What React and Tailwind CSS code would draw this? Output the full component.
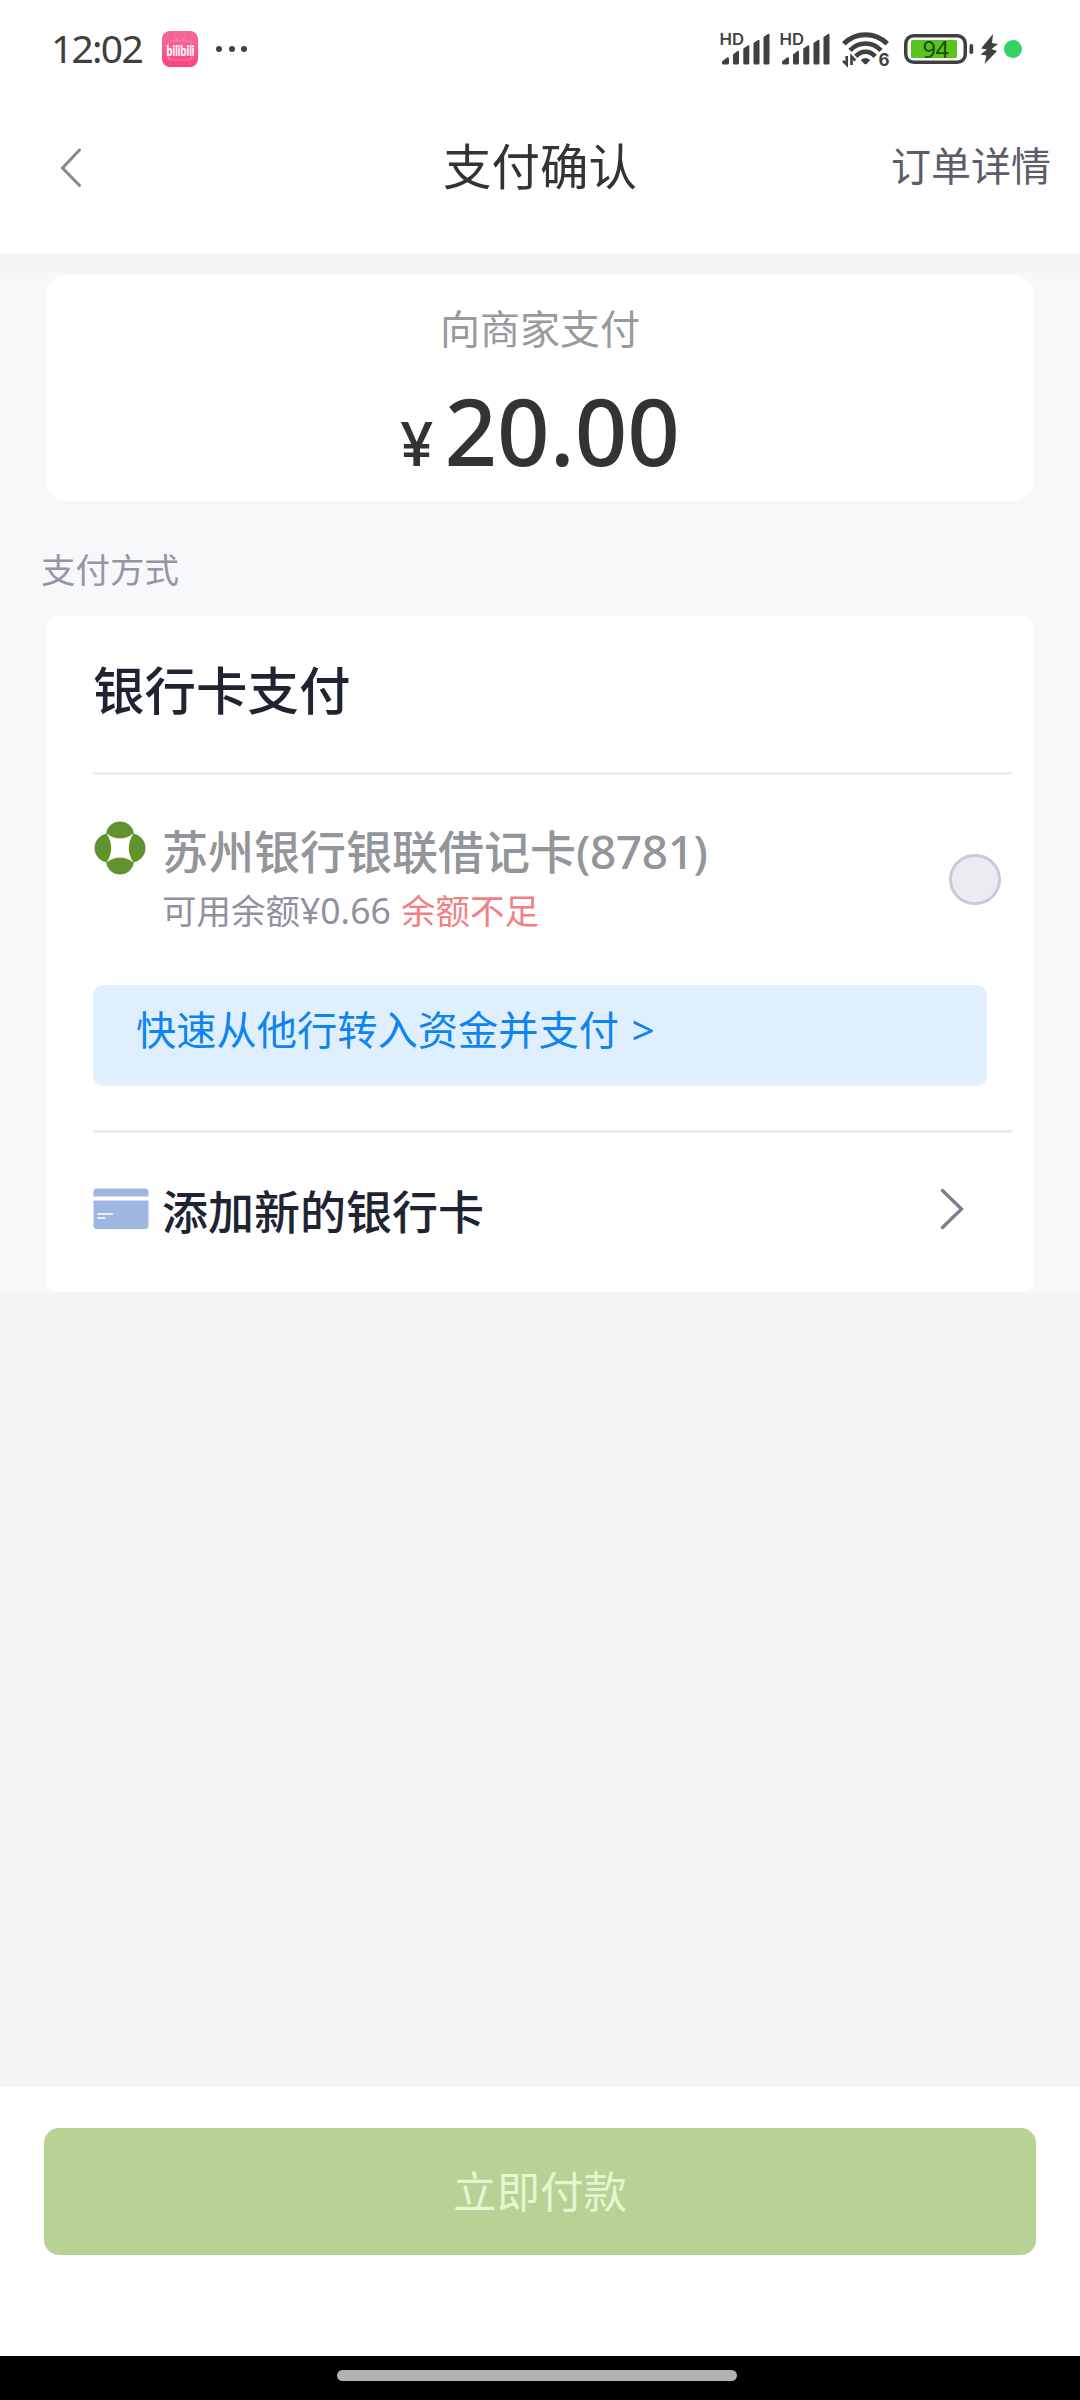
const LATIN = "font-['Noto_Sans','Noto_Sans_CJK_SC',sans-serif]";

function BilibiliBadge() {
  return (
    <svg className="overflow-visible" width="36" height="36" viewBox="0 0 36 36">
      <defs>
        <linearGradient id="pink" x1="0" y1="0" x2="0" y2="1">
          <stop offset="0" stopColor="#f2699a" />
          <stop offset="0.5" stopColor="#fb5a91" />
          <stop offset="1" stopColor="#fb3f82" />
        </linearGradient>
      </defs>
      <rect width="36" height="36" rx="8" fill="url(#pink)" />
      <rect x="6" y="10" width="24" height="19" rx="4" fill="none" stroke="#fb86ae" strokeWidth="1.2" />
      <path d="M13 6l3 4M23 6l-3 4" stroke="#fb86ae" strokeWidth="1.2" />
      <text
        x="4.5"
        y="24.5"
        fontFamily="Lato, sans-serif"
        fontWeight="900"
        fontSize="15.500"
        fill="#fff"
        textLength="28"
        lengthAdjust="spacingAndGlyphs"
      >
        bilibili
      </text>
    </svg>
  );
}

function Signal() {
  return (
    <svg className="overflow-visible" width="50" height="34" viewBox="0 0 50 34" fill="#404040">
      <text
        x="-0.5"
        y="13"
        fontFamily="Inter, sans-serif"
        fontWeight="600"
        fontSize="16"
        textLength="24.5"
        lengthAdjust="spacingAndGlyphs"
      >
        HD
      </text>
      <path d="M2 29.500l5-4q2-1 2 1v4.500q0 1.500-1.500 1.500h-4q-1.500 0-1.500-1.500z" />
      <path d="M13 22.500l4.500-3.500q1.500-1 1.500 1v11q0 1.500-1.500 1.500h-3q-1.500 0-1.500-1.500z" />
      <path d="M23.300 16.500l4.500-3q1.500-1 1.500 1v16.500q0 1.500-1.500 1.500h-3q-1.500 0-1.500-1.500z" />
      <path d="M33.500 11l4.500-3q1.500-1 1.500 1v22q0 1.500-1.500 1.500h-3q-1.500 0-1.500-1.500z" />
      <path d="M43.500 5l4.500-3q1.500-1 1.500 1v28q0 1.500-1.500 1.500h-3q-1.500 0-1.500-1.500z" />
    </svg>
  );
}

function Wifi() {
  return (
    <svg className="overflow-visible" width="48" height="36" viewBox="0 0 48 36" fill="none" stroke="#404040">
      <path d="M1.800 12.800C14 0.800 33 0.800 45.200 12.800" strokeWidth="5" />
      <path d="M8 19.300C17 10.300 30 10.300 39 19.300" strokeWidth="4.600" />
      <path d="M13.800 25.300C19.500 19.300 27.500 19.300 33.200 25.300" strokeWidth="4.600" />
      <path d="M18.800 29q4.700-4 9.400 0l-3.400 3.800q-1.300 1.100-2.600 0z" fill="#404040" stroke="none" />
      <path d="M4.700 25v8.500L1 29.800M9.500 34v-8.500l3.800 4" strokeWidth="2.600" />
      <text
        x="36.500"
        y="34.500"
        fontFamily="Inter, sans-serif"
        fontWeight="700"
        fontSize="17"
        fill="#404040"
        stroke="none"
      >
        6
      </text>
    </svg>
  );
}

function Battery() {
  return (
    <svg className="overflow-visible" width="70" height="32" viewBox="0 0 70 32">
      <rect x="1.750" y="2.750" width="59.500" height="26.500" rx="8" fill="none" stroke="#404040" strokeWidth="3.500" />
      <rect x="7" y="7" width="46" height="18" rx="1.500" fill="#58c41e" />
      <rect x="65.500" y="11" width="3.700" height="10" rx="1.800" fill="#404040" />
      <text
        x="31.500"
        y="25"
        textAnchor="middle"
        fontFamily="Noto Sans, sans-serif"
        fontWeight="400"
        fontSize="23.500"
        letterSpacing="-0.5"
        fill="#1c4a0c"
      >
        94
      </text>
    </svg>
  );
}

function BankLogo() {
  return (
    <svg width="52" height="54" viewBox="0 0 52 54">
      <g fill="#62922c">
        <circle cx="26" cy="14.500" r="14" />
        <circle cx="26" cy="39.500" r="14" />
        <circle cx="15" cy="27" r="14.500" />
        <circle cx="37" cy="27" r="14.500" />
      </g>
      <path
        d="M12.500 12.500Q26 22.500 39.500 12.500Q30 27 39.500 41.500Q26 31.500 12.500 41.500Q22 27 12.500 12.500z"
        fill="#fff"
      />
    </svg>
  );
}

function CardIcon() {
  return (
    <svg width="56" height="42" viewBox="0 0 56 42">
      <path d="M4 0.500h48q3.500 0 3.500 3.500v4.500h-55V4q0-3.500 3.500-3.500z" fill="#9fb6e2" />
      <path d="M0.500 12.500h55v25q0 3.500-3.500 3.500H4q-3.500 0-3.500-3.500z" fill="#9fb6e2" />
      <path d="M5 26h14M5 30h6.500" stroke="#e8eefa" strokeWidth="2.200" strokeLinecap="round" />
    </svg>
  );
}

function StatusBar() {
  return (
    <div className="flex h-[98px] shrink-0 items-center justify-between pr-[58px] pl-[51px]">
      <div className="flex items-center">
        <span className={`w-[111px] pb-[2px] text-[39px] leading-[54px] tracking-[-1.750px] text-[#404040] ${LATIN}`}>
          12:02
        </span>
        <BilibiliBadge />
        <div className="ml-[18px] flex gap-[6.500px]">
          <i className="size-[6px] rounded-full bg-[#404040]" />
          <i className="size-[6px] rounded-full bg-[#404040]" />
          <i className="size-[6px] rounded-full bg-[#404040]" />
        </div>
      </div>
      <div className="flex items-center">
        <Signal />
        <span className="w-[10px]" />
        <Signal />
        <span className="w-[12px]" />
        <Wifi />
        <span className="w-[14px]" />
        <Battery />
        <svg className="ml-[6px]" width="18" height="30" viewBox="0 0 18 30" fill="#404040">
          <path d="M13 0L1 14.500l6 1L0.500 20.500l6 1L4.500 30L17 17l-5.500-2L18 10l-6-1z" />
        </svg>
        <i className="ml-[6px] size-[18px] rounded-full bg-[#30d565]" />
      </div>
    </div>
  );
}

export default function App() {
  return (
    <div className="flex h-[2400px] w-[1080px] flex-col overflow-hidden bg-white font-['Noto_Sans_CJK_SC',sans-serif]">
      <StatusBar />

      <header className="grid h-[155px] shrink-0 grid-cols-3 items-start pt-[38px]">
        <svg className="mt-[12px] ml-[59px]" width="24" height="40" viewBox="0 0 24 40">
          <path d="M20.500 2L3.500 20L20.500 37.500" fill="none" stroke="#888" strokeWidth="3" strokeLinecap="round" />
        </svg>
        <h1 className="text-center text-[48.500px] leading-[56px] text-[#333]">支付确认</h1>
        <a className="pr-[29px] text-right text-[40px] leading-[56px] text-[#5c5c6b]">订单详情</a>
      </header>

      <div className="h-[20px] shrink-0 bg-[#f5f5f5]" />

      <main className="flex h-[1019px] shrink-0 flex-col bg-[#f7f8fa] px-[46px]">
        <section className="mt-[2px] flex h-[226px] flex-col items-center rounded-[22px] bg-white">
          <p className="mt-[26px] text-[40px] leading-[52px] text-[#999a9e]">向商家支付</p>
          <div className="mt-[33px] flex h-[90px] items-baseline font-['Inter',sans-serif] text-[#333]">
            <span className="text-[60px] leading-[80px] font-medium">¥</span>
            <span className={`ml-[11px] text-[92px] leading-[90px] font-medium ${LATIN}`}>20.00</span>
          </div>
        </section>

        <p className="mt-[42px] -ml-[5px] text-[34.500px] leading-[50px] text-[#9595a5]">支付方式</p>

        <section className="mt-[23px] flex h-[676px] flex-col rounded-[12px] bg-white pr-[22px] pl-[47px]">
          <h2 className="flex h-[156px] items-center pb-[13px] text-[51.500px] leading-[60px] font-medium text-[#1f2433]">
            银行卡支付
          </h2>
          <div className="h-[3px] bg-[#ededef]" />

          <div className="mt-[46px] flex items-start pr-[11px] pl-px">
            <BankLogo />
            <div className="ml-[16px] flex-1">
              <p className={`text-[46px] leading-[60px] font-medium text-[#929599] ${LATIN}`}>
                苏州银行银联借记卡<span className="tracking-[-0.4px]">(8781)</span>
              </p>
              <p className={`mt-[3px] text-[34.500px] leading-[52px] text-[#9191a2] ${LATIN}`}>
                可用余额<span className="text-[35.500px]">¥0.66 </span>
                <span className="ml-px text-[#f37f84]">余额不足</span>
              </p>
            </div>
            <span className="mt-[33px] h-[51px] w-[52px] rounded-full border-[3px] border-[#cbc9d1] bg-[#ebebf2]" />
          </div>

          <a
            className={`mt-[48px] mr-[25px] block h-[101px] rounded-[11px] bg-[#dfeffe] pt-[15px] pl-[43px] text-[40.250px] leading-[60px] text-[#0e83f2] ${LATIN}`}
          >
            快速从他行转入资金并支付 <span className="ml-[2px]">&gt;</span>
          </a>
          <div className="mt-[44px] h-[3px] bg-[#ededef]" />

          <div className="mt-[43px] flex h-[66px] items-center pr-[47px]">
            <CardIcon />
            <span className="ml-[13px] flex-1 text-[46px] leading-[66px] font-medium text-[#1f2433]">添加新的银行卡</span>
            <svg width="26" height="42" viewBox="0 0 26 42">
              <path d="M3.500 2.500L22.500 21L3.500 39.500" fill="none" stroke="#7f7f8b" strokeWidth="3.400" strokeLinecap="round" />
            </svg>
          </div>
        </section>
      </main>

      <div className="flex-1 bg-[#f5f5f5]" />

      <footer className="h-[269px] shrink-0 px-[44px] pt-[41px]">
        <button className="flex h-[127px] w-full items-center justify-center rounded-[15px] bg-[#b8d195] pb-[3px] text-[43.500px] leading-[60px] text-[#e2f7cf]">
          立即付款
        </button>
      </footer>
      <nav className="flex h-[44px] shrink-0 justify-center bg-black pt-[14px] pr-[6px]">
        <i className="h-[11px] w-[400px] rounded-full bg-[#b2b2b2]" />
      </nav>
    </div>
  );
}
